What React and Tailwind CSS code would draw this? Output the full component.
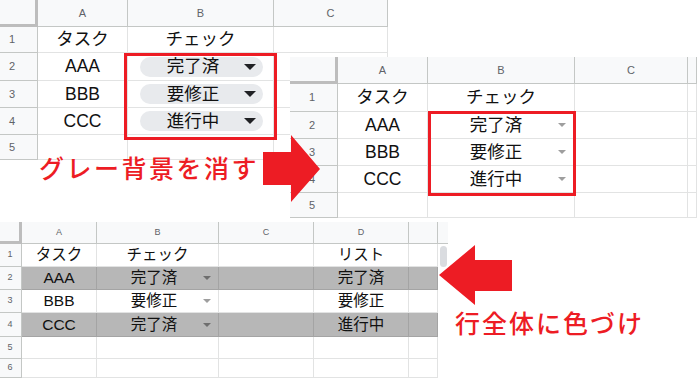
import React from "react";

const FONT = "font-['Liberation_Sans','Noto_Sans_CJK_JP',sans-serif]";
const RED_TEXT =
  "font-['Noto_Sans_CJK_JP',sans-serif] font-medium text-[25px] leading-none text-[#ed1c24]";

/* ---------- small pieces ---------- */

function Tri({ dark, dim }) {
  if (dark) {
    return (
      <span className="mr-[7px] h-0 w-0 border-x-[6px] border-t-[6px] border-x-transparent border-t-[#202124]" />
    );
  }
  if (dim) {
    return (
      <span className="h-0 w-0 border-x-[4px] border-t-[4px] border-x-transparent border-t-[#6e6e6e]" />
    );
  }
  return (
    <span className="h-0 w-0 border-x-[4px] border-t-[4px] border-x-transparent border-t-[#9e9e9e]" />
  );
}

function Pill({ children }) {
  return (
    <div className="ml-[12px] mr-[10px] flex h-[20px] flex-1 items-center rounded-full bg-[#e8eaed]">
      <span className="flex-1 pl-[2px] text-center">{children}</span>
      <Tri dark />
    </div>
  );
}

function Drop({ children, pad, dim }) {
  return (
    <div className={`flex w-full items-center ${pad}`}>
      <span className="flex-1 text-center">{children}</span>
      <Tri dim={dim} />
    </div>
  );
}

/* ---------- generic sheet ---------- */

function Sheet({ widths, headH, letters, rows, bodySize, headSize, numPad, scroll, headExtra }) {
  const body = (
    <div>
      {rows.map((row, r) => (
        <div key={r} className={`flex ${row.h}`}>
          {row.cells.map((c, i) =>
            i === 0 ? (
              <div
                key={i}
                className={`${widths[0]} ${headSize} ${numPad} flex shrink-0 items-center justify-center border-r border-b border-[#c4c7c5] bg-[#f8f9fa] text-[#5f6368]`}
              >
                {c}
              </div>
            ) : (
              <div
                key={i}
                className={`${widths[i]} flex shrink-0 items-center justify-center border-r border-b ${
                  row.gray ? "border-[#a4a4a4] bg-[#b7b7b7]" : "border-[#e2e3e3] bg-white"
                }`}
              >
                {c}
              </div>
            )
          )}
        </div>
      ))}
    </div>
  );

  return (
    <div className={`bg-white text-[#111] ${FONT} ${bodySize}`}>
      <div className={`flex ${headH}`}>
        {letters.map((l, i) =>
          i === 0 ? (
            <div
              key={i}
              className={`${widths[0]} shrink-0 border-r-[3px] border-b-[3px] border-[#bdbdbd] bg-[#f8f9fa]`}
            />
          ) : (
            <div
              key={i}
              className={`${widths[i]} ${headSize} flex shrink-0 items-center justify-center border-r border-b border-[#c4c7c5] bg-[#f8f9fa] text-[#5f6368]`}
            >
              {l}
            </div>
          )
        )}
        {headExtra}
      </div>
      {scroll ? (
        <div className="flex">
          {body}
          <div className="flex w-[10px] shrink-0 justify-center bg-white pt-[2px]">
            <div className="h-[21px] w-[7px] rounded-full bg-[#dadce0]" />
          </div>
        </div>
      ) : (
        body
      )}
    </div>
  );
}

/* ---------- panels ---------- */

function PanelOne() {
  return (
    <Sheet
      widths={["w-[38px]", "w-[90px]", "w-[146px]", "w-[114px]"]}
      headH="h-[27px]"
      letters={["", "A", "B", "C"]}
      bodySize="text-[17.5px]"
      headSize="text-[11px]"
      numPad="pr-[13px]"
      rows={[
        { h: "h-[26px]", cells: ["1", "タスク", "チェック", ""] },
        { h: "h-[28px]", cells: ["2", "AAA", <Pill key="p">完了済</Pill>, ""] },
        { h: "h-[27px]", cells: ["3", "BBB", <Pill key="p">要修正</Pill>, ""] },
        { h: "h-[27px]", cells: ["4", "CCC", <Pill key="p">進行中</Pill>, ""] },
        { h: "h-[25px]", cells: ["5", "", "", ""] },
      ]}
    />
  );
}

function PanelTwo() {
  const drop = (t) => <Drop pad="pl-[6px] pr-[8px]">{t}</Drop>;
  return (
    <Sheet
      widths={["w-[48px]", "w-[90px]", "w-[147px]", "w-[113px]", "w-[9px]"]}
      headH="h-[27px]"
      letters={["", "A", "B", "C", ""]}
      bodySize="text-[17.5px]"
      headSize="text-[11px]"
      numPad="pr-[3px]"
      rows={[
        { h: "h-[28px]", cells: ["1", "タスク", "チェック", "", ""] },
        { h: "h-[27px]", cells: ["2", "AAA", drop("完了済"), "", ""] },
        { h: "h-[27px]", cells: ["3", "BBB", drop("要修正"), "", ""] },
        { h: "h-[27px]", cells: ["4", "CCC", drop("進行中"), "", ""] },
        { h: "h-[25px]", cells: ["5", "", "", "", ""] },
      ]}
    />
  );
}

function PanelThree() {
  const drop = (t, dim) => (
    <Drop pad="pl-[8px] pr-[7px]" dim={dim}>
      {t}
    </Drop>
  );
  return (
    <Sheet
      widths={["w-[22px]", "w-[75px]", "w-[122px]", "w-[95px]", "w-[95px]", "w-[29px]"]}
      headH="h-[22px]"
      letters={["", "A", "B", "C", "D", ""]}
      bodySize="text-[15.5px]"
      headSize="text-[9px]"
      numPad="pr-[1px]"
      scroll
      headExtra={<div className="w-[10px] shrink-0 border-b border-[#c4c7c5] bg-[#f8f9fa]" />}
      rows={[
        { h: "h-[23px]", cells: ["1", "タスク", "チェック", "", "リスト", ""] },
        { h: "h-[23px]", gray: true, cells: ["2", "AAA", drop("完了済", true), "", "完了済", ""] },
        { h: "h-[23px]", cells: ["3", "BBB", drop("要修正"), "", "要修正", ""] },
        { h: "h-[24px]", gray: true, cells: ["4", "CCC", drop("完了済", true), "", "進行中", ""] },
        { h: "h-[22px]", cells: ["5", "", "", "", "", ""] },
        { h: "h-[19px]", cells: ["6", "", "", "", "", ""] },
      ]}
    />
  );
}

/* ---------- page ---------- */

export default function App() {
  return (
    <div className="relative h-[378px] w-[697px] overflow-hidden bg-white">
      {/* screenshots laid over each other */}
      <div className="absolute left-0 top-0">
        <PanelOne />
      </div>
      <div className="absolute left-[124px] top-[53px] h-[87px] w-[153px] border-[3px] border-[#ed1c24]" />

      <div className="absolute left-[290px] top-[57px]">
        <PanelTwo />
      </div>
      <div className="absolute left-[428px] top-[111px] h-[85px] w-[148px] border-[3px] border-[#ed1c24]" />

      <div className="absolute left-0 top-[222px]">
        <PanelThree />
      </div>

      {/* annotations */}
      <div className={`absolute left-[39px] top-[155px] tracking-[2.5px] ${RED_TEXT}`}>
        グレー背景を消す
      </div>
      <svg className="absolute left-[263px] top-[135px]" width="57" height="67" viewBox="0 0 57 67">
        <polygon points="0,17 28,17 28,0 57,34 28,67 28,50 0,50" fill="#ed1c24" />
      </svg>

      <svg className="absolute left-[439px] top-[245px]" width="73" height="60" viewBox="0 0 73 60">
        <polygon points="0,30 36,0 36,15 73,15 73,46 36,46 36,60" fill="#ed1c24" />
      </svg>
      <div className={`absolute left-[455px] top-[310px] tracking-[2px] ${RED_TEXT}`}>
        行全体に色づけ
      </div>
    </div>
  );
}
